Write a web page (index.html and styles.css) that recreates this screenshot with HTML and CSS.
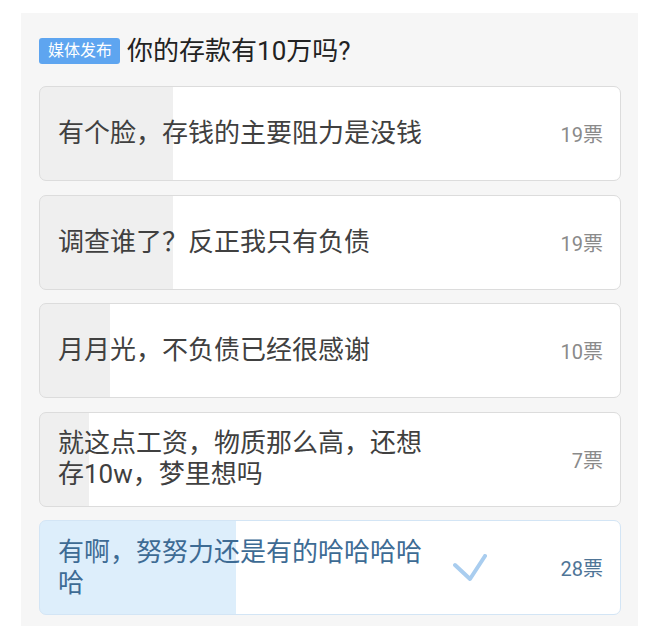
FILE: index.html
```html
<!DOCTYPE html>
<html lang="zh-CN">
	<head>
		<meta charset="UTF-8" />
		<meta name="viewport" content="width=device-width, initial-scale=1.0" />
		<title>投票</title>
		<link rel="stylesheet" href="styles.css">
	</head>
	<body>
		<div class="poll">
			<div class="poll-head">
				<span class="badge">媒体发布</span>
				<h1 class="question">你的存款有10万吗?</h1>
			</div>

			<ul class="options">
				<li class="option" style="--pct: 22.9%">
					<span class="option-text">有个脸，存钱的主要阻力是没钱</span>
					<span class="votes">19票</span>
				</li>
				<li class="option" style="--pct: 22.9%">
					<span class="option-text">调查谁了？反正我只有负债</span>
					<span class="votes">19票</span>
				</li>
				<li class="option" style="--pct: 12.05%">
					<span class="option-text">月月光，不负债已经很感谢</span>
					<span class="votes">10票</span>
				</li>
				<li class="option" style="--pct: 8.43%">
					<span class="option-text">就这点工资，物质那么高，还想存10w，梦里想吗</span>
					<span class="votes">7票</span>
				</li>
				<li class="option selected" style="--pct: 33.73%">
					<span class="option-text">有啊，努努力还是有的哈哈哈哈哈</span>
					<svg class="check" width="34" height="28" viewBox="0 0 34 28">
						<path d="M2 11 L17 25 L32 2" fill="none" stroke="#a9cdef" stroke-width="4" stroke-linecap="round" stroke-linejoin="round" />
					</svg>
					<span class="votes">28票</span>
				</li>
			</ul>
		</div>
	</body>
</html>
```

FILE: styles.css
```css
body {
	margin: 0;
	background: #fff;
	font-family: Roboto, "Noto Sans CJK SC", sans-serif;
	color: #3c3c3c;
}
.poll {
	margin: 13px 22px 0 21px;
	padding: 25px 17px 12px 18px;
	background: #f6f6f6;
	min-height: 600px;
	box-sizing: border-box;
}
.poll-head {
	display: flex;
	align-items: center;
	gap: 7px;
	height: 26px;
}
.badge {
	display: inline-block;
	height: 26px;
	line-height: 26px;
	padding: 0 8px 0 9px;
	border-radius: 3px;
	background: #5ea5f0;
	color: #fff;
	font-size: 16px;
}
.question {
	margin: 0;
	font-size: 26px;
	font-weight: normal;
	color: #222;
	line-height: 26px;
}
.options {
	list-style: none;
	margin: 22px 0 0;
	padding: 0;
	display: flex;
	flex-direction: column;
	gap: 13.5px;
}
.option {
	display: flex;
	align-items: center;
	height: 95px;
	box-sizing: border-box;
	padding: 0 17px 0 18px;
	border: 1px solid #dcdcdc;
	border-radius: 7px;
	background: linear-gradient(to right, #efefef var(--pct), #fff var(--pct));
}
.option-text {
	width: 372px;
	font-size: 26px;
	line-height: 31px;
	color: #404040;
}
.votes {
	margin-left: auto;
	font-size: 20px;
	color: #8a8a8a;
}
.selected {
	border-color: #d3e5f5;
	background: linear-gradient(to right, #ddeefb var(--pct), #fff var(--pct));
}
.selected .option-text {
	color: #3d6b94;
}
.selected .votes {
	color: #4f7597;
}
.check {
	margin-left: 23px;
}
```
